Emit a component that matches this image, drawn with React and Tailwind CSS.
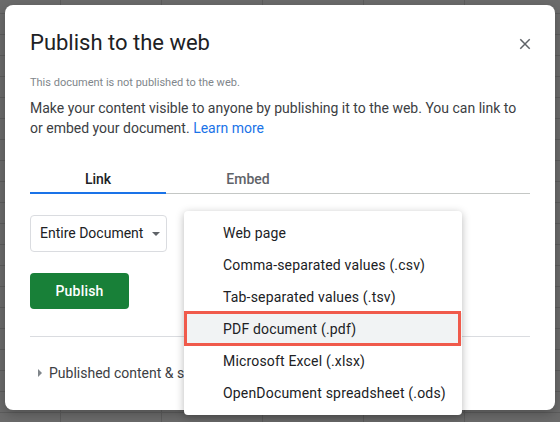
import { useState } from 'react';

const formats = [
    'Web page',
    'Comma-separated values (.csv)',
    'Tab-separated values (.tsv)',
    'PDF document (.pdf)',
    'Microsoft Excel (.xlsx)',
    'OpenDocument spreadsheet (.ods)',
];

const CloseIcon = () => (
    <svg width="12" height="12" viewBox="0 0 12 12" fill="none" stroke="#5f6368" strokeWidth="1.5" strokeLinecap="square">
        <path d="M1.8 1.8 L10.2 10.2 M10.2 1.8 L1.8 10.2" />
    </svg>
);

const App = () => {
    const [tab, setTab] = useState('link');
    const [selected] = useState('PDF document (.pdf)');

    return (
        <div className="relative w-[560px] h-[422px] overflow-hidden bg-[#6b6b6b] bg-[linear-gradient(90deg,#5d5d5d_1px,transparent_1px),linear-gradient(180deg,#5d5d5d_1px,transparent_1px)] bg-[size:101px_21px] bg-[position:60px_13px] p-[5px] font-['Roboto',sans-serif]">
            {/* dialog */}
            <div className="w-[550px] h-[405px] bg-white rounded-[8px] shadow-[0_4px_12px_rgba(0,0,0,0.25)] pl-[25px] pr-[25px] pt-[24px]">
                <div className="flex items-start justify-between">
                    <h2 className="text-[22px] leading-[28px] text-[#202124] font-normal">Publish to the web</h2>
                    <button className="mt-[8px] mr-[-2px] w-[14px] h-[14px] flex items-center justify-center">
                        <CloseIcon />
                    </button>
                </div>

                <p className="mt-[18px] text-[11px] leading-[16px] text-[#80868b]">
                    This document is not published to the web.
                </p>
                <p className="mt-[7px] text-[14px] leading-[20px] text-[#3c4043]">
                    Make your content visible to anyone by publishing it to the web. You can link to or embed your document.{' '}
                    <span className="text-[#1a73e8]">Learn more</span>
                </p>

                {/* tabs */}
                <div className="mt-[20px] flex border-b border-[#c4c7c5] w-[500px]">
                    <button
                        onClick={() => setTab('link')}
                        className={`w-[136px] pt-[11px] pb-[3px] text-[14px] leading-[20px] font-medium -mb-px border-b-2 ${tab === 'link' ? 'text-[#202124] border-[#1a73e8]' : 'text-[#5f6368] border-transparent'}`}
                    >
                        Link
                    </button>
                    <button
                        onClick={() => setTab('embed')}
                        className={`w-[164px] pt-[11px] pb-[3px] text-[14px] leading-[20px] font-medium -mb-px border-b-2 ${tab === 'embed' ? 'text-[#202124] border-[#1a73e8]' : 'text-[#5f6368] border-transparent'}`}
                    >
                        Embed
                    </button>
                </div>

                {/* document select */}
                <div className="mt-[21px] w-[137px] h-[37px] border border-[#dadce0] rounded-[4px] flex items-center pl-[9px] gap-[9px]">
                    <span className="text-[14px] text-[#202124]">Entire Document</span>
                    <span className="w-0 h-0 border-l-[4px] border-r-[4px] border-t-[4px] border-l-transparent border-r-transparent border-t-[#5f6368]" />
                </div>

                <button className="mt-[21px] w-[99px] h-[36px] bg-[#188038] rounded-[4px] text-white text-[14px] font-medium tracking-[0.2px]">
                    Publish
                </button>

                <div className="mt-[27px] w-[500px] border-t border-[#dadce0]" />

                <div className="mt-[26px] flex items-center pl-[8px] gap-[7px]">
                    <span className="w-0 h-0 border-t-[4px] border-b-[4px] border-l-[4px] border-t-transparent border-b-transparent border-l-[#80868b]" />
                    <span className="text-[14px] leading-[20px] text-[#3c4043]">Published content &amp; settings</span>
                </div>
            </div>

            {/* format dropdown menu */}
            <div className="absolute left-[184px] top-[211px] w-[278px] bg-white rounded-[4px] shadow-[0_2px_8px_rgba(0,0,0,0.28)] py-[6px]">
                {formats.map((f) => (
                    <div
                        key={f}
                        className={`relative h-[32px] flex items-center pl-[39px] text-[14px] tracking-[0.18px] text-[#202124] ${f === selected ? 'bg-[#f1f3f4]' : ''}`}
                    >
                        {f}
                        {f === selected && (
                            <div className="absolute left-0 right-[1px] top-[-2px] bottom-[-1px] border-[3px] border-[#f05a4b]" />
                        )}
                    </div>
                ))}
            </div>
        </div>
    );
};

export default App;
